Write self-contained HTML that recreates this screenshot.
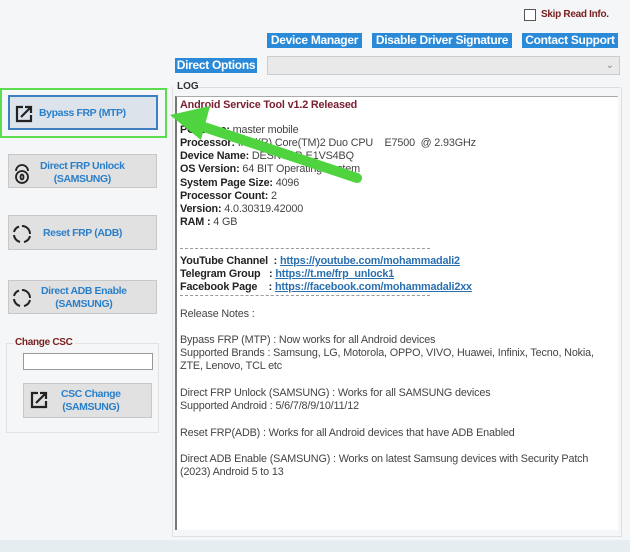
<!DOCTYPE html>
<html><head><meta charset="utf-8"><style>
*{margin:0;padding:0;box-sizing:border-box}
body{width:630px;height:552px;background:#f5f6f7;font-family:"Liberation Sans",Arial,sans-serif;position:relative;overflow:hidden}
.a{position:absolute}
.tb{position:absolute;background:#2a8ad8;color:#fff;font-weight:bold;font-size:12px;height:15px;line-height:15px;text-align:center;letter-spacing:-0.3px;transform-origin:left}
.btn{position:absolute;background:#e1e1e1;border:1px solid #c8c8c8;color:#2a7fc9;font-weight:bold;font-size:10.5px;letter-spacing:-0.4px}
.log{position:absolute;left:175px;top:96px;width:443px;height:434px;background:#fff;border-left:2px solid #777;border-top:1px solid #aaa;font-size:10.8px;color:#444;padding-left:3px;letter-spacing:-0.15px}
.log div{position:absolute;left:3px;white-space:nowrap}
b{color:#222}
.u{color:#2a6fb0;text-decoration:underline;font-weight:bold}
.d{width:250px;height:0;border-top:1px dashed #999}
</style></head><body>
<div class="a" style="left:524px;top:9px;width:12px;height:12px;border:1px solid #555;background:#fff"></div>
<div class="a" style="left:541px;top:9px;font-size:10px;font-weight:bold;color:#7a2020;letter-spacing:-0.3px">Skip Read Info.</div>
<div class="tb" style="left:267px;top:33px;width:95px">Device Manager</div>
<div class="tb" style="left:372px;top:33px;width:140px">Disable Driver Signature</div>
<div class="tb" style="left:522px;top:33px;width:96px">Contact Support</div>
<div class="tb" style="left:175px;top:58px;width:82px">Direct Options</div>
<div class="a" style="left:267px;top:56px;width:353px;height:19px;background:#e9e9e9;border:1px solid #ccc;color:#888;font-size:10px;text-align:right;padding-right:5px;line-height:17px">⌄</div>
<div class="a" style="left:177px;top:81px;font-size:10px;font-weight:bold;color:#333">LOG</div>
<div class="a" style="left:198px;top:87px;width:422px;border-top:1px solid #ddd"></div>
<div class="a" style="left:172px;top:87px;width:450px;height:450px;border:1px solid #e0e0e0;border-top:none"></div>
<div class="log">
<div style="top:2px;color:#7a2030;font-weight:bold">Android Service Tool v1.2 Released</div>
<div style="top:27px"><b>PC Name:</b> master mobile</div>
<div style="top:40px"><b>Processor:</b> Intel(R) Core(TM)2 Duo CPU &nbsp;&nbsp;&nbsp;E7500 &nbsp;@ 2.93GHz</div>
<div style="top:53px"><b>Device Name:</b> DESKTOP-E1VS4BQ</div>
<div style="top:66px"><b>OS Version:</b> 64 BIT Operating System</div>
<div style="top:80px"><b>System Page Size:</b> 4096</div>
<div style="top:93px"><b>Processor Count:</b> 2</div>
<div style="top:106px"><b>Version:</b> 4.0.30319.42000</div>
<div style="top:119px"><b>RAM :</b> 4 GB</div>
<div class="d" style="top:151px"></div>
<div style="top:158px"><b>YouTube Channel &nbsp;:</b> <span class="u">https://youtube.com/mohammadali2</span></div>
<div style="top:171px"><b>Telegram Group &nbsp;&nbsp;:</b> <span class="u">https://t.me/frp_unlock1</span></div>
<div style="top:184px"><b>Facebook Page &nbsp;&nbsp;&nbsp;:</b> <span class="u">https://facebook.com/mohammadali2xx</span></div>
<div class="d" style="top:198px"></div>
<div style="top:211px">Release Notes :</div>
<div style="top:237px">Bypass FRP (MTP) : Now works for all Android devices</div>
<div style="top:250px">Supported Brands : Samsung, LG, Motorola, OPPO, VIVO, Huawei, Infinix, Tecno, Nokia,</div>
<div style="top:263px">ZTE, Lenovo, TCL etc</div>
<div style="top:290px">Direct FRP Unlock (SAMSUNG) : Works for all SAMSUNG devices</div>
<div style="top:303px">Supported Android : 5/6/7/8/9/10/11/12</div>
<div style="top:330px">Reset FRP(ADB) : Works for all Android devices that have ADB Enabled</div>
<div style="top:356px">Direct ADB Enable (SAMSUNG) : Works on latest Samsung devices with Security Patch</div>
<div style="top:369px">(2023) Android 5 to 13</div>
</div>
<div class="a" style="left:0;top:540px;width:630px;height:12px;background:#e6edf1"></div>

<div class="a" style="left:0;top:88px;width:167px;height:50px;border:2px solid #5ddc4f"></div>
<div class="btn" style="left:8px;top:95px;width:150px;height:35px;border:2px solid #3d7fc0;background:#dde3ea">
<svg class="a" style="left:4px;top:7px" width="20" height="20" viewBox="0 0 20 20" fill="none" stroke="#222" stroke-width="2.2"><path d="M9 3H3v14h14v-6"/><path d="M7 13L17 3M11 3h6v6"/></svg>
<span class="a" style="left:29px;top:10px">Bypass FRP (MTP)</span></div>

<div class="btn" style="left:8px;top:154px;width:149px;height:34px">
<svg class="a" style="left:3px;top:7px" width="20" height="22" viewBox="0 0 20 22" fill="none" stroke="#222" stroke-width="1.8"><path d="M4 9a6 6 0 0 1 12 0"/><circle cx="10" cy="15" r="6"/><ellipse cx="10" cy="15" rx="1.5" ry="2.5"/></svg>
<span class="a" style="left:31px;top:5px;text-align:center;line-height:13px">Direct FRP Unlock<br>(SAMSUNG)</span></div>

<div class="btn" style="left:8px;top:215px;width:149px;height:35px">
<svg class="a" style="left:3px;top:8px" width="20" height="20" viewBox="0 0 20 20" fill="none" stroke="#222" stroke-width="2"><path d="M10 2a8 8 0 0 1 8 8M18 12a8 8 0 0 1-6 6M8 18a8 8 0 0 1-6-7M2 8a8 8 0 0 1 5-5.5" /></svg>
<span class="a" style="left:34px;top:11px">Reset FRP (ADB)</span></div>

<div class="btn" style="left:8px;top:280px;width:149px;height:34px">
<svg class="a" style="left:3px;top:7px" width="20" height="20" viewBox="0 0 20 20" fill="none" stroke="#222" stroke-width="2"><path d="M10 2a8 8 0 0 1 8 8M18 12a8 8 0 0 1-6 6M8 18a8 8 0 0 1-6-7M2 8a8 8 0 0 1 5-5.5" /></svg>
<span class="a" style="left:32px;top:4px;text-align:center;line-height:13px">Direct ADB Enable<br>(SAMSUNG)</span></div>

<div class="a" style="left:6px;top:343px;width:153px;height:90px;border:1px solid #e2e2e2"></div>
<div class="a" style="left:13px;top:337px;font-size:10px;font-weight:bold;color:#7a2020;background:#f5f6f7;padding:0 2px;letter-spacing:-0.3px">Change CSC</div>
<div class="a" style="left:23px;top:353px;width:130px;height:17px;background:#fff;border:1px solid #999"></div>
<div class="btn" style="left:23px;top:383px;width:129px;height:35px">
<svg class="a" style="left:5px;top:6px" width="20" height="20" viewBox="0 0 20 20" fill="none" stroke="#222" stroke-width="2.2"><path d="M9 3H3v14h14v-6"/><path d="M7 13L17 3M11 3h6v6"/></svg>
<span class="a" style="left:37px;top:4px;text-align:center;line-height:13px">CSC Change<br>(SAMSUNG)</span></div>

<svg class="a" style="left:165px;top:100px" width="210" height="90" viewBox="0 0 210 90">
<path d="M192 78L30 24" stroke="#4fd43f" stroke-width="10" stroke-linecap="round"/>
<path d="M5 15L45 6L36 40Z" fill="#4fd43f"/>
</svg>
</body></html>
